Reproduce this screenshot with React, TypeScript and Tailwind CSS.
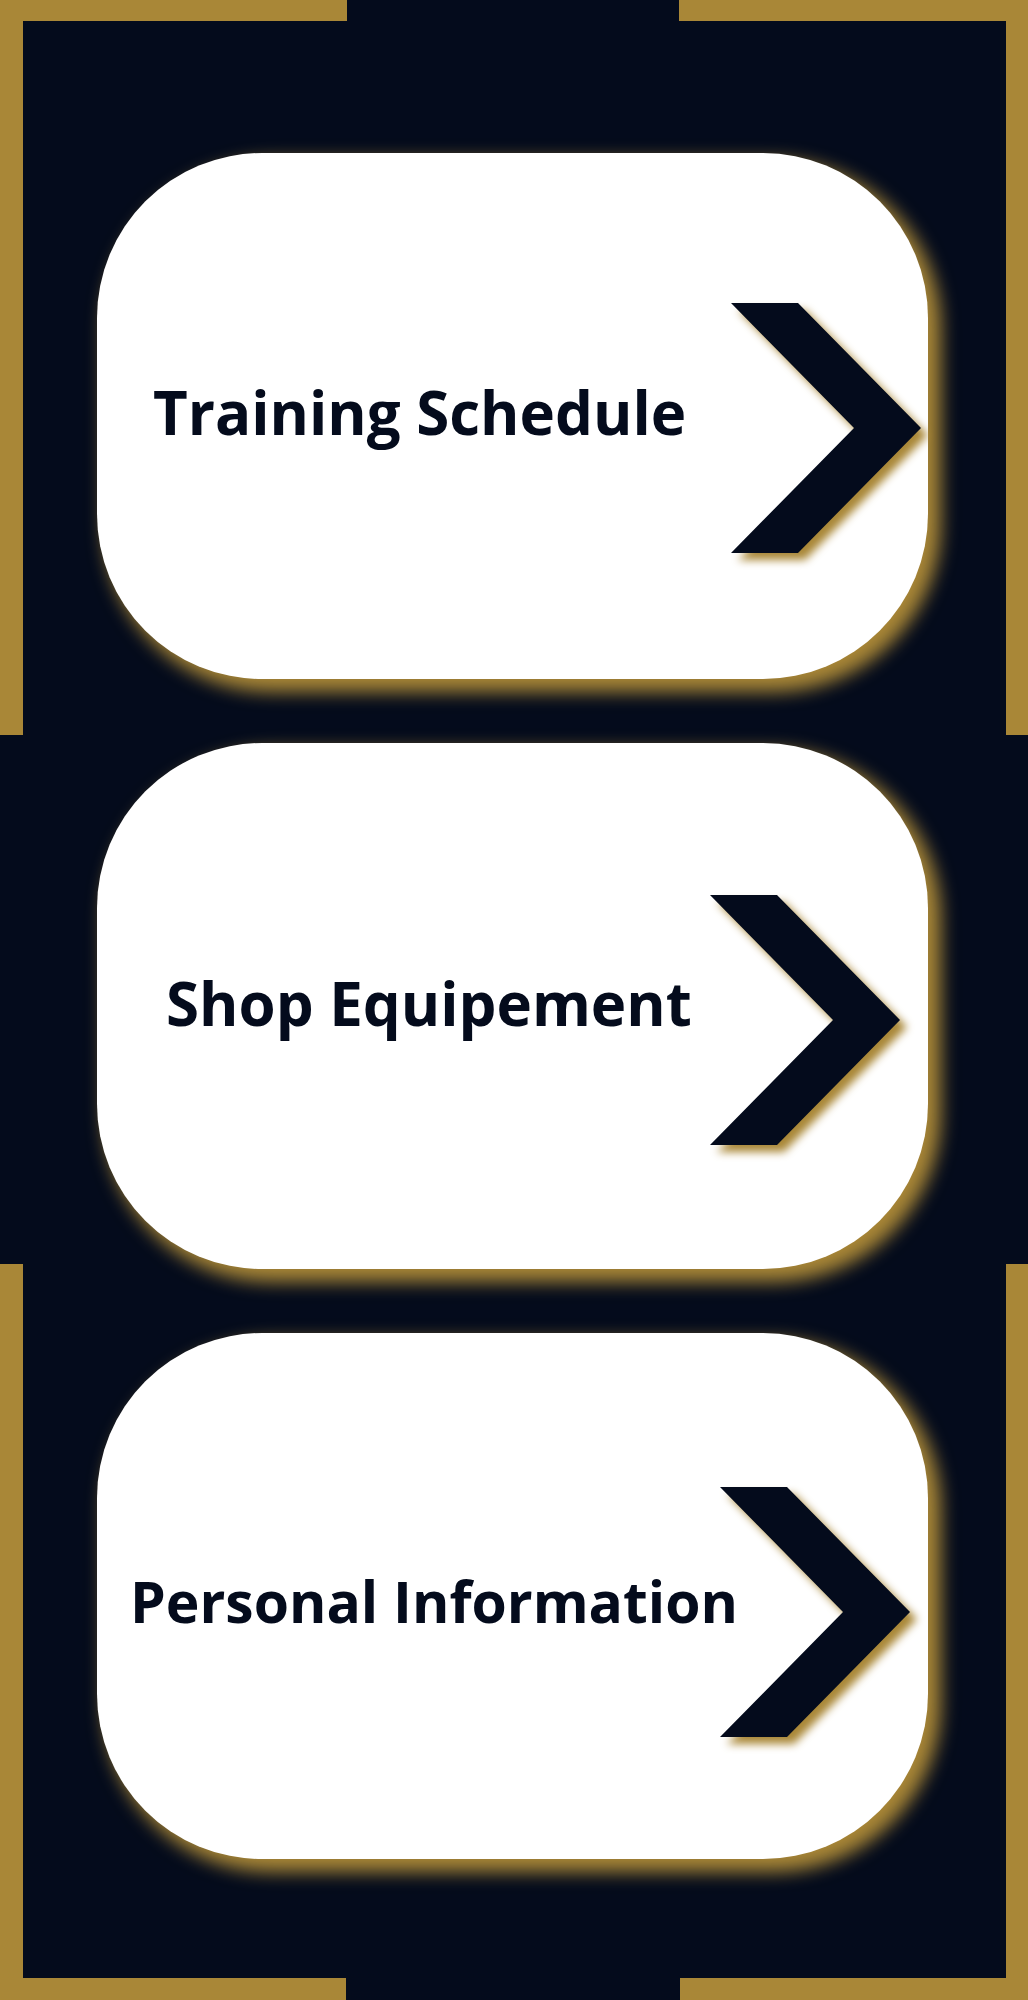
type Item = {
  label: string;
  textClass: string;
  chevronClass: string;
};

const items: Item[] = [
  { label: "Training Schedule", textClass: "ml-[56px] mt-[229px] text-[60px]", chevronClass: "mr-[7px] mt-[150px]" },
  { label: "Shop Equipement", textClass: "ml-[69px] mt-[230px] text-[60px]", chevronClass: "mr-[28px] mt-[152px]" },
  { label: "Personal Information", textClass: "ml-[33px] mt-[240px] text-[57px]", chevronClass: "mr-[18px] mt-[154px]" },
];

function Chevron({ className }: { className: string }) {
  return (
    <svg
      viewBox="0 0 190 250"
      className={`col-start-1 row-start-1 h-[250px] w-[190px] justify-self-end self-start drop-shadow-[7px_7px_4px_#a98737] ${className}`}
    >
      <polygon points="0,0 67,0 190,125 67,250 0,250 123,125" fill="#040b1c" />
    </svg>
  );
}

function MenuCard({ item }: { item: Item }) {
  return (
    <button className="grid h-[526px] w-[831px] cursor-pointer rounded-[165px] bg-white text-left shadow-[10px_10px_18px_3px_#a98737]">
      <span
        className={`col-start-1 row-start-1 self-start justify-self-start whitespace-nowrap font-bold leading-none text-[#040b1c] ${item.textClass}`}
        style={{ fontFamily: '"Open Sans", "Noto Sans", sans-serif' }}
      >
        {item.label}
      </span>
      <Chevron className={item.chevronClass} />
    </button>
  );
}

export default function App() {
  return (
    <div className="relative h-[2000px] w-[1028px] overflow-hidden bg-[#040b1c]">
      {/* corner brackets */}
      <div className="absolute left-0 top-0 h-[735px] w-[347px] border-l-[23px] border-t-[21px] border-[#a98737]" />
      <div className="absolute right-0 top-0 h-[735px] w-[349px] border-r-[22px] border-t-[21px] border-[#a98737]" />
      <div className="absolute bottom-0 left-0 h-[736px] w-[346px] border-b-[22px] border-l-[23px] border-[#a98737]" />
      <div className="absolute bottom-0 right-0 h-[736px] w-[348px] border-b-[22px] border-r-[22px] border-[#a98737]" />

      <div className="relative flex flex-col gap-[64px] pl-[97px] pt-[153px]">
        {items.map((item) => (
          <MenuCard key={item.label} item={item} />
        ))}
      </div>
    </div>
  );
}
